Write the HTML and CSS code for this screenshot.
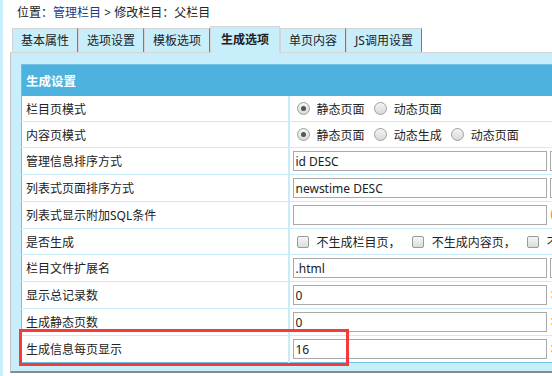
FILE: index.html
```html
<!DOCTYPE html>
<html>
<head>
    <meta charset="utf-8">
    <title>修改栏目</title>
    <link rel="stylesheet" href="styles.css">
</head>
<body>
    <div class="crumb">位置：<a href="#">管理栏目</a> &gt; 修改栏目：父栏目</div>

    <ul class="tabs">
        <li>基本属性</li>
        <li>选项设置</li>
        <li>模板选项</li>
        <li class="on">生成选项</li>
        <li>单页内容</li>
        <li>JS调用设置</li>
    </ul>

    <div class="panel">
        <table class="form">
            <colgroup>
                <col class="col-label">
                <col class="col-value">
            </colgroup>
            <tr><th colspan="2">生成设置</th></tr>
            <tr class="short">
                <td class="label">栏目页模式</td>
                <td>
                    <span class="opt"><span class="radio on"></span>静态页面</span>
                    <span class="opt"><span class="radio"></span>动态页面</span>
                </td>
            </tr>
            <tr class="short">
                <td class="label">内容页模式</td>
                <td>
                    <span class="opt"><span class="radio on"></span>静态页面</span>
                    <span class="opt"><span class="radio"></span>动态生成</span>
                    <span class="opt"><span class="radio"></span>动态页面</span>
                </td>
            </tr>
            <tr>
                <td class="label">管理信息排序方式</td>
                <td><input class="text" type="text" value="id DESC"><span class="box"></span></td>
            </tr>
            <tr>
                <td class="label">列表式页面排序方式</td>
                <td><input class="text" type="text" value="newstime DESC"><span class="box"></span></td>
            </tr>
            <tr>
                <td class="label">列表式显示附加SQL条件</td>
                <td><input class="text" type="text" value=""><span class="hint">(</span></td>
            </tr>
            <tr class="short">
                <td class="label">是否生成</td>
                <td>
                    <span class="opt check"><span class="cb"></span>不生成栏目页，</span>
                    <span class="opt check"><span class="cb"></span>不生成内容页，</span>
                    <span class="opt check"><span class="cb"></span>不生成JS调用</span>
                </td>
            </tr>
            <tr>
                <td class="label">栏目文件扩展名</td>
                <td><input class="text" type="text" value=".html"><span class="box"></span></td>
            </tr>
            <tr>
                <td class="label">显示总记录数</td>
                <td><input class="text" type="text" value="0"><span class="hint">:</span></td>
            </tr>
            <tr>
                <td class="label">生成静态页数</td>
                <td><input class="text" type="text" value="0"><span class="hint">:</span></td>
            </tr>
            <tr>
                <td class="label">生成信息每页显示</td>
                <td><input class="text" type="text" value="16"><span class="hint">:</span></td>
            </tr>
        </table>
    </div>

    <div class="mark"></div>
</body>
</html>
```

FILE: styles.css
```css
html, body {
    overflow: hidden;
}

body {
    position: relative;
    margin: 0;
    height: 376px;
    border-left: 3px solid #c8eefb;
    font-family: "Noto Sans", "Noto Sans CJK SC", sans-serif;
    font-size: 12px;
    color: #222;
    background-color: #fff;
}

/* breadcrumb */
.crumb {
    height: 28px;
    line-height: 26px;
    padding-left: 14px;
    white-space: nowrap;
}

.crumb a {
    color: #1c3a86;
    text-decoration: none;
}

/* tabs */
.tabs {
    display: flex;
    align-items: flex-end;
    height: 24px;
    margin: 0;
    padding: 0 0 0 9px;
    list-style: none;
}

.tabs li {
    height: 23px;
    line-height: 23px;
    padding: 0 8px;
    border-top: 1px solid #d4d4d4;
    border-left: 1px solid #d4d4d4;
    border-right: 1px solid #7c7c7c;
    background-color: #c8eefb;
    white-space: nowrap;
}

.tabs li.on {
    position: relative;
    height: 26px;
    line-height: 25px;
    padding: 0 10px;
    margin-bottom: -1px;
    font-weight: bold;
    border-right-color: #d4d4d4;
}

/* panel */
.panel {
    margin-left: 7px;
    padding: 11px 0 8px 10px;
    border-top: 1px solid #d4d4d4;
    border-left: 1px solid #c4c4c4;
    border-bottom: 2px solid #8a8a8a;
    background-color: #c8eefb;
}

.form {
    width: 600px;
    table-layout: fixed;
    border-collapse: collapse;
    border: 1px solid #6fc2e4;
    background-color: #fff;
}

.col-label {
    width: 267px;
}

.form th {
    height: 31px;
    padding: 0 0 0 4px;
    text-align: left;
    font-size: 12.5px;
    font-weight: bold;
    color: #fff;
    background-color: #4db2dd;
}

.form td {
    height: 26px;
    padding: 0 0 0 3px;
    border-bottom: 1px solid #c9ecf8;
    white-space: nowrap;
    overflow: hidden;
}

.form tr.short td {
    height: 25px;
}

.form td.label {
    padding-left: 4px;
    border-right: 2px solid #c9ecf8;
}

.form tr:last-child td {
    border-bottom: none;
}

.text {
    box-sizing: border-box;
    width: 254px;
    height: 20px;
    margin: 0;
    padding: 0 2px;
    border: 1px solid #a9a9a9;
    font-family: inherit;
    font-size: 12px;
    color: #222;
    vertical-align: middle;
}

.box {
    display: inline-block;
    width: 12px;
    height: 18px;
    margin-left: 3px;
    border: 1px solid #a9a9a9;
    vertical-align: middle;
}

.hint {
    margin-left: 4px;
    color: #e08a1e;
}

/* radio and checkbox */
.opt {
    display: inline-flex;
    align-items: center;
    margin-left: 4px;
    margin-right: 6px;
    vertical-align: middle;
}

.opt.check {
    margin-right: 8px;
}

.opt + .opt {
    margin-left: 0;
}

.radio {
    position: relative;
    box-sizing: border-box;
    width: 13px;
    height: 13px;
    margin-right: 7px;
    border: 1px solid #a0a0a0;
    border-radius: 50%;
    background: linear-gradient(#f4f4f4, #d8d8d8);
}

.radio.on:after {
    content: "";
    position: absolute;
    top: 3px;
    left: 3px;
    width: 5px;
    height: 5px;
    border-radius: 50%;
    background-color: #555;
}

.cb {
    box-sizing: border-box;
    width: 12px;
    height: 12px;
    margin-right: 8px;
    border: 1px solid #9a9a9a;
    border-radius: 2px;
    background: linear-gradient(#f6f6f6, #dcdcdc);
}

/* annotation */
.mark {
    position: absolute;
    left: 16px;
    top: 329px;
    width: 330px;
    height: 37px;
    box-sizing: border-box;
    border: 3px solid #f53a3a;
}
```
